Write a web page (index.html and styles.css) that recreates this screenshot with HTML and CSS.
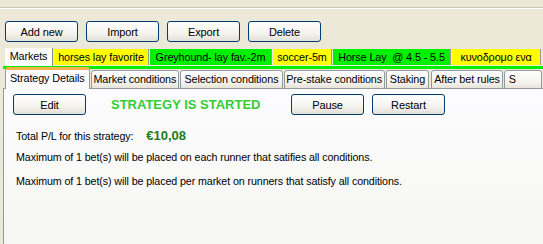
FILE: index.html
```html
<!DOCTYPE html>
<html lang="en">
<head>
  <meta charset="UTF-8" />
  <title>Strategies</title>
  <link rel="stylesheet" href="styles.css">
</head>
<body>

<div class="linha-topo"></div>

<div class="barra">
  <button class="botao">Add new</button>
  <button class="botao">Import</button>
  <button class="botao">Export</button>
  <button class="botao">Delete</button>
</div>

<div class="mercados">
  <div class="mtab mtab-ativa m-markets">Markets</div>
  <div class="mtab amarelo m-horses">horses lay favorite</div>
  <div class="mtab verde m-grey">Greyhound- lay fav.-2m</div>
  <div class="mtab amarelo m-soccer">soccer-5m</div>
  <div class="mtab verde m-horselay">Horse Lay &nbsp;@ 4.5 - 5.5</div>
  <div class="mtab amarelo m-kyno">κυνοδρομο ενα</div>
</div>

<div class="abas">
  <div class="aba aba-ativa a-details">Strategy Details</div>
  <div class="aba a-market">Market conditions</div>
  <div class="aba a-selection">Selection conditions</div>
  <div class="aba a-prestake">Pre-stake conditions</div>
  <div class="aba a-staking">Staking</div>
  <div class="aba a-after">After bet rules</div>
  <div class="aba a-s">S</div>
</div>

<div class="pagina">
  <div class="acoes">
    <button class="botao">Edit</button>
    <span class="status">STRATEGY IS STARTED</span>
    <button class="botao botao-pause">Pause</button>
    <button class="botao">Restart</button>
  </div>
  <p class="linha linha-pl">Total P/L for this strategy: <b class="valor">€10,08</b></p>
  <p class="linha linha-2">Maximum of 1 bet(s) will be placed on each runner that satifies all conditions.</p>
  <p class="linha linha-3">Maximum of 1 bet(s) will be placed per market on runners that satisfy all conditions.</p>
</div>

</body>
</html>
```

FILE: styles.css
```css
body {
  margin: 0;
  width: 543px;
  height: 244px;
  overflow: hidden;
  background: #ece9d8;
  font-family: 'Liberation Sans', Arial, sans-serif;
  font-size: 11px;
  color: #000;
}
.linha-topo {
  margin-top: 7px;
  border-top: 1px solid #cdc9ba;
  border-bottom: 1px solid #fff;
}
.barra {
  display: flex;
  gap: 8px;
  margin-top: 12px;
  padding-left: 5px;
}
.botao {
  width: 73px;
  height: 21px;
  padding: 0;
  border: 1px solid #003c74;
  border-radius: 3px;
  background: linear-gradient(#ffffff, #f4f3ee 60%, #e3e0d6);
  font-family: inherit;
  font-size: 11px;
  letter-spacing: -0.1px;
  color: #000;
}

/* linha de abas coloridas dos mercados */
.mercados {
  display: flex;
  height: 19px;
  margin-top: 5px;
  padding-left: 5px;
}
.mtab {
  box-sizing: border-box;
  height: 16px;
  margin-top: 2px;
  margin-right: 1px;
  line-height: 16px;
  text-align: center;
  white-space: nowrap;
  border-right: 1px solid #9a9a9a;
  font-size: 10.8px;
  letter-spacing: -0.1px;
}
.mtab-ativa {
  height: 18px;
  margin-top: 1px;
  line-height: 17px;
  background: #fff;
  border-right: 1px solid #8a8a8a;
}
.amarelo { background: #ffff00; }
.verde { background: #00f000; }
.m-markets { width: 48px; }
.m-horses { width: 95px; }
.m-grey { width: 122px; }
.m-soccer { width: 59px; }
.m-horselay { width: 118px; }
.m-kyno { width: 89px; }

/* abas da estrategia */
.abas {
  display: flex;
  align-items: flex-end;
  height: 23px;
  margin-left: 3px;
  padding-left: 2px;
  background:
    linear-gradient(#00f000, #00f000) top / 100% 3px no-repeat,
    linear-gradient(#919b9c, #919b9c) bottom / 100% 1px no-repeat;
}
.aba {
  box-sizing: border-box;
  height: 19px;
  margin-right: 1px;
  line-height: 16px;
  text-align: center;
  white-space: nowrap;
  overflow: hidden;
  border: 1px solid #919b9c;
  border-radius: 3px 3px 0 0;
  background: linear-gradient(#ffffff, #f3f2ec 70%, #e6e3d8);
  font-size: 10.8px;
  letter-spacing: -0.1px;
}
.aba-ativa {
  height: 22px;
  line-height: 17px;
  border-bottom: none;
  border-top: 3px solid #f7b34a;
  background: #fcfcfe;
}
.a-details { width: 89px; }
.a-market { width: 93px; }
.a-selection { width: 108px; }
.a-prestake { width: 106px; }
.a-staking { width: 46px; margin-right: 2px; }
.a-after { width: 75px; }
.a-s { width: 40px; text-align: left; padding-left: 4px; }

.pagina {
  height: 155px;
  margin-left: 3px;
  border-left: 1px solid #919b9c;
  background: linear-gradient(#fcfcfe, #f6f6f3);
}
.acoes {
  display: flex;
  align-items: center;
  padding: 5px 0 0 9px;
}
.status {
  width: 152px;
  margin-left: 25px;
  margin-right: 28px;
  font-size: 13px;
  font-weight: bold;
  white-space: nowrap;
  color: #32cd32;
}
.botao-pause {
  margin-right: 8px;
}
.linha {
  margin: 0;
  padding-left: 12px;
  height: 13px;
  line-height: 13px;
  white-space: nowrap;
  font-size: 10.7px;
  letter-spacing: -0.1px;
}
.linha-pl { margin-top: 14px; }
.linha-2 { margin-top: 9px; }
.linha-3 { margin-top: 11px; }
.valor {
  margin-left: 10px;
  font-size: 13px;
  letter-spacing: 0;
  color: #1d7d1d;
}
```
